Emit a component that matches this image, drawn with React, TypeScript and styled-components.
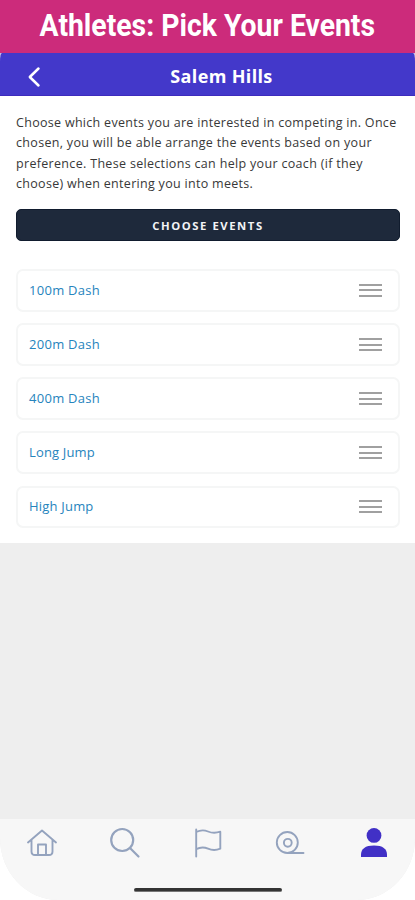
import React from "react";
import styled, { createGlobalStyle } from "styled-components";

const GlobalStyle = createGlobalStyle`
  *, *::before, *::after { box-sizing: border-box; }
  body { margin: 0; background: #fff; font-family: "Open Sans", "Noto Sans", sans-serif; }
  button { font: inherit; border: 0; padding: 0; background: none; }
`;

const Screen = styled.div`
  width: 415px;
  height: 900px;
  display: flex;
  flex-direction: column;
  overflow: hidden;
  background: #fff;
`;

const Banner = styled.header`
  height: 53px;
  flex: none;
  display: flex;
  align-items: center;
  justify-content: center;
  padding-bottom: 3px;
  background: #cc2b7b;
  color: #fff;
`;

const BannerTitle = styled.h1`
  margin: 0;
  flex: none;
  white-space: nowrap;
  font: 700 32px/50px Roboto, sans-serif;
  transform: scaleX(0.886);
`;

const Phone = styled.div`
  flex: 1;
  min-height: 0;
  display: flex;
  flex-direction: column;
  background: #eee;
  border-radius: 2px 2px 58px 58px / 8px 8px 62px 62px;
  overflow: hidden;
`;

const PhoneBackdrop = styled.div`
  flex: 1;
  min-height: 0;
  display: flex;
  flex-direction: column;
  background: linear-gradient(#c8bce6 0 12px, #fff 12px);
`;

const TitleBar = styled.div`
  height: 43px;
  flex: none;
  display: grid;
  grid-template-columns: 68px 1fr 68px;
  align-items: center;
  background: #4338ca;
  border-bottom: 1px solid #3e2bbd;
  color: #fff;
`;

const BackButton = styled.button`
  display: flex;
  justify-content: center;
  color: inherit;
  padding-top: 5px;
`;

const TeamName = styled.h2`
  margin: 0;
  padding: 3px 0 0 28px;
  text-align: center;
  font-size: 18px;
  line-height: 40px;
  font-weight: 700;
  white-space: nowrap;
  letter-spacing: 0.35px;
`;

const Content = styled.main`
  height: 447px;
  flex: none;
  padding: 17px 15px 0 16px;
  background: #fff;
`;

const Intro = styled.p`
  margin: 0;
  color: #383838;
  font-size: 12.5px;
  line-height: 20.3px;
`;

const Line = styled.span<{ $spacing: number }>`
  display: block;
  white-space: nowrap;
  letter-spacing: ${(p) => p.$spacing}px;
`;

const ChooseButton = styled.button`
  display: block;
  width: 100%;
  height: 32px;
  margin-top: 15px;
  border: 1px solid #111c2e;
  border-radius: 5px;
  background: #1e293b;
  color: #f3f4f6;
  font-size: 11.3px;
  line-height: 32px;
  font-weight: 700;
  letter-spacing: 1.55px;
`;

const EventList = styled.ul`
  list-style: none;
  margin: 28px 0 0;
  padding: 0;
  display: grid;
  grid-auto-rows: 42.5px;
  row-gap: 11.6px;
`;

const EventRow = styled.li`
  display: flex;
  align-items: center;
  justify-content: space-between;
  padding: 0 16px 0 11px;
  border: 2px solid #f5f6f6;
  border-radius: 7px;
`;

const EventName = styled.span<{ $spacing: number }>`
  color: #2684bd;
  font-size: 13px;
  line-height: 20px;
  padding-bottom: 1px;
  letter-spacing: ${(p) => p.$spacing}px;
`;

const Handle = styled.span`
  width: 23px;
  height: 13px;
  display: flex;
  flex-direction: column;
  justify-content: space-between;
`;

const Bar = styled.i`
  height: 2px;
  background: #a0a0a0;
`;

const TabBar = styled.nav`
  height: 81px;
  flex: none;
  margin-top: auto;
  display: flex;
  flex-direction: column;
  align-items: center;
  background: #f7f7f7;
`;

const Tabs = styled.div`
  width: 100%;
  height: 46px;
  display: grid;
  grid-template-columns: repeat(5, 1fr);
  justify-items: center;
  align-items: center;
`;

const Tab = styled.button<{ $active?: boolean }>`
  width: 34px;
  height: 34px;
  color: ${(p) => (p.$active ? "#4130c6" : "#94a3be")};
  svg { display: block; fill: none; stroke: currentColor; stroke-width: 1.9; stroke-linecap: round; stroke-linejoin: round; }
`;

const HomeIndicator = styled.div`
  width: 148px;
  height: 4px;
  margin-top: 23px;
  border-radius: 2px;
  background: #343434;
  border-bottom: 1px solid #777;
`;

const intro = [
  { text: "Choose which events you are interested in competing in. Once", spacing: 0.3 },
  { text: "chosen, you will be able arrange the events based on your", spacing: 0.32 },
  { text: "preference. These selections can help your coach (if they", spacing: 0.32 },
  { text: "choose) when entering you into meets.", spacing: 0.3 },
];

const events = [
  { name: "100m Dash", spacing: 0.28 },
  { name: "200m Dash", spacing: 0.28 },
  { name: "400m Dash", spacing: 0.28 },
  { name: "Long Jump", spacing: 0.15 },
  { name: "High Jump", spacing: 0.2 },
];

const tabs = [
  {
    label: "Home",
    icon: <path d="M3 17.500 17 5.500l14 12M6.500 15v11.500q0 3.500 3.500 3.500h14q3.500 0 3.500-3.500V15M13 30V19.500h8V30" />,
  },
  {
    label: "Search",
    icon: <><circle cx="14.200" cy="15" r="11" strokeWidth="2.2" /><path d="m22 23 8.500 8.500" strokeWidth="2.2" /></>,
  },
  {
    label: "Meets",
    icon: <path d="M5.200 4.500v27M5.200 7q6-3 11.800-.5t12.300.2v17q-6.300 2.600-12.300 0t-11.800.5" />,
  },
  {
    label: "Results",
    icon: <><circle cx="13.300" cy="17.500" r="10.500" /><circle cx="13.800" cy="17.800" r="3.900" /><path d="M14 28h15.500" /></>,
  },
  {
    label: "Profile",
    active: true,
    icon: <g fill="currentColor" stroke="none"><circle cx="17" cy="10.400" r="7.400" /><path d="M4 31.500v-1.500q0-9.500 13-9.500t13 9.500v1.500q0 .5-.5.5h-25q-.5 0-.5-.5z" /></g>,
  },
];

export default function App() {
  return (
    <Screen>
      <GlobalStyle />
      <Banner>
        <BannerTitle>Athletes: Pick Your Events</BannerTitle>
      </Banner>
      <PhoneBackdrop>
        <Phone>
          <TitleBar>
            <BackButton aria-label="Back">
              <svg width="14" height="22" viewBox="0 0 14 22" fill="none" stroke="currentColor" strokeWidth="2.5" strokeLinecap="round" strokeLinejoin="round">
                <path d="M11.500 2.500 2.800 11l8.700 8.500" />
              </svg>
            </BackButton>
            <TeamName>Salem Hills</TeamName>
          </TitleBar>
          <Content>
            <Intro>
              {intro.map((l) => <Line key={l.text} $spacing={l.spacing}>{l.text}</Line>)}
            </Intro>
            <ChooseButton>CHOOSE EVENTS</ChooseButton>
            <EventList>
              {events.map((e) => (
                <EventRow key={e.name}>
                  <EventName $spacing={e.spacing}>{e.name}</EventName>
                  <Handle><Bar /><Bar /><Bar /></Handle>
                </EventRow>
              ))}
            </EventList>
          </Content>
          <TabBar>
            <Tabs>
              {tabs.map((t) => (
                <Tab key={t.label} aria-label={t.label} $active={t.active}>
                  <svg width="34" height="34" viewBox="0 0 34 34">{t.icon}</svg>
                </Tab>
              ))}
            </Tabs>
            <HomeIndicator />
          </TabBar>
        </Phone>
      </PhoneBackdrop>
    </Screen>
  );
}
